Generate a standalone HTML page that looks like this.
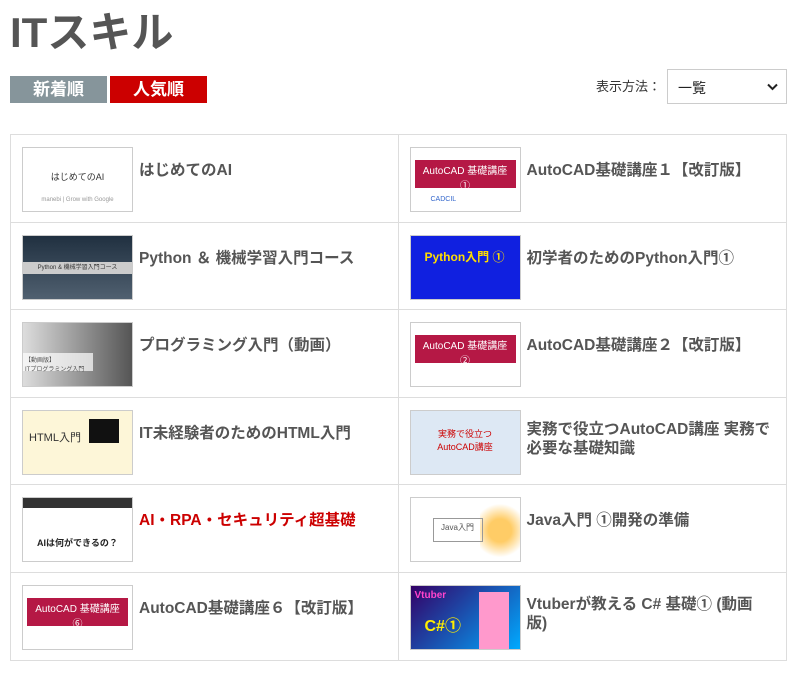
<!DOCTYPE html>
<html><head><meta charset="utf-8"><style>
*{margin:0;padding:0;box-sizing:border-box}
body{width:800px;height:679px;background:#fff;font-family:"Liberation Sans","Noto Sans CJK JP",sans-serif;color:#555;position:relative;overflow:hidden}
h1{position:absolute;left:10px;top:-1px;font-size:42px;font-weight:bold;color:#555;letter-spacing:0px}
.btn{position:absolute;top:76px;height:27px;width:97px;color:#fff;font-weight:bold;font-size:17px;text-align:center;line-height:27px}
.lbl{position:absolute;left:596px;top:76px;font-size:13px;color:#333}
.sel{position:absolute;left:667px;top:69px;width:120px;height:35px;border:1px solid #ccc;font-size:14px;color:#222;padding:8px 10px}
.sel svg{position:absolute;right:8px;top:13px}
.grid{position:absolute;left:10px;top:134px;width:777px;border:1px solid #ddd;border-bottom:none}
.row{display:flex;height:87.6px;border-bottom:1px solid #ddd}
.cell{width:50%;display:flex;align-items:flex-start;padding:12px 0 0 11px;position:relative}
.cell:first-child{border-right:1px solid #ddd}
.th{width:111px;height:65px;border:1px solid #ccc;flex:none;position:relative;overflow:hidden;font-size:9px}
.t{font-size:15.5px;font-weight:bold;margin:14px 0 0 6px;line-height:19px;color:#555}
</style></head><body>
<h1>ITスキル</h1>
<div class="btn" style="left:10px;background:#86959b">新着順</div>
<div class="btn" style="left:110px;background:#cc0000">人気順</div>
<div class="lbl">表示方法：</div>
<div class="sel">一覧<svg width="11" height="8" viewBox="0 0 11 8"><path d="M1 1.5 L5.5 6 L10 1.5" stroke="#222" stroke-width="2" fill="none"/></svg></div>
<div class="grid">
<div class="row">
<div class="cell"><div class="th" style="background:#fff;text-align:center;padding-top:22px;color:#333">はじめてのAI<div style="font-size:6px;margin-top:14px;color:#999">manebi | Grow with Google</div></div><div class="t">はじめてのAI</div></div>
<div class="cell"><div class="th" style="background:#fff"><div style="position:absolute;left:4px;top:12px;width:101px;height:28px;font-size:10px;text-align:center;padding-top:2px;background:#b51845;color:#fff">AutoCAD 基礎講座<br>①</div><div style="position:absolute;left:20px;top:48px;font-size:7px;color:#36c">CADCIL</div></div><div class="t">AutoCAD基礎講座１【改訂版】</div></div>
</div>
<div class="row">
<div class="cell"><div class="th" style="background:linear-gradient(#203040,#506070);"><div style="position:absolute;left:0;top:26px;width:100%;height:12px;background:#ccc;font-size:6px;color:#333;text-align:center">Python & 機械学習入門コース</div></div><div class="t">Python ＆ 機械学習入門コース</div></div>
<div class="cell"><div class="th" style="background:#1020e0;color:#fd0;font-weight:bold;font-size:12px;padding:12px 0 0 14px">Python入門 ①</div><div class="t">初学者のためのPython入門①</div></div>
</div>
<div class="row">
<div class="cell"><div class="th" style="background:linear-gradient(90deg,#ddd,#555)"><div style="position:absolute;left:0;top:30px;width:70px;height:18px;background:rgba(255,255,255,.7);font-size:6px;padding:2px">【動画版】<br>ITプログラミング入門</div></div><div class="t">プログラミング入門（動画）</div></div>
<div class="cell"><div class="th" style="background:#fff"><div style="position:absolute;left:4px;top:12px;width:101px;height:28px;font-size:10px;text-align:center;padding-top:2px;background:#b51845;color:#fff">AutoCAD 基礎講座<br>②</div></div><div class="t">AutoCAD基礎講座２【改訂版】</div></div>
</div>
<div class="row">
<div class="cell"><div class="th" style="background:#fdf6d8"><div style="position:absolute;left:6px;top:18px;font-size:11px;color:#333">HTML入門</div><div style="position:absolute;left:66px;top:8px;width:30px;height:24px;background:#111"></div></div><div class="t">IT未経験者のためのHTML入門</div></div>
<div class="cell"><div class="th" style="background:#dde8f4;text-align:center;padding-top:16px;color:#c00;font-size:9px">実務で役立つ<br>AutoCAD講座</div><div class="t" style="margin-top:10px">実務で役立つAutoCAD講座 実務で<br>必要な基礎知識</div></div>
</div>
<div class="row">
<div class="cell"><div class="th" style="background:#fff"><div style="position:absolute;left:0;top:0;width:100%;height:10px;background:#333"></div><div style="position:absolute;left:14px;top:38px;font-size:9px;font-weight:bold;color:#222">AIは何ができるの？</div></div><div class="t" style="color:#cc0000">AI・RPA・セキュリティ超基礎</div></div>
<div class="cell"><div class="th" style="background:#fff"><div style="position:absolute;right:0;top:0;width:40px;height:65px;background:radial-gradient(circle,#fc6 30%,#fff 70%)"></div><div style="position:absolute;left:22px;top:20px;width:50px;height:24px;border:1px solid #999;font-size:8px;text-align:center;padding-top:3px">Java入門</div></div><div class="t">Java入門 ①開発の準備</div></div>
</div>
<div class="row">
<div class="cell"><div class="th" style="background:#fff"><div style="position:absolute;left:4px;top:12px;width:101px;height:28px;font-size:10px;text-align:center;padding-top:2px;background:#b51845;color:#fff">AutoCAD 基礎講座<br>⑥</div></div><div class="t">AutoCAD基礎講座６【改訂版】</div></div>
<div class="cell"><div class="th" style="background:linear-gradient(135deg,#306,#0af);"><div style="position:absolute;left:4px;top:4px;font-size:10px;color:#f4c;font-weight:bold">Vtuber</div><div style="position:absolute;left:14px;top:26px;font-size:16px;color:#fe0;font-weight:bold">C#①</div><div style="position:absolute;left:68px;top:6px;width:30px;height:58px;background:#f9c"></div></div><div class="t" style="margin-top:10px">Vtuberが教える C# 基礎① (動画<br>版)</div></div>
</div>
</div>
</body></html>
